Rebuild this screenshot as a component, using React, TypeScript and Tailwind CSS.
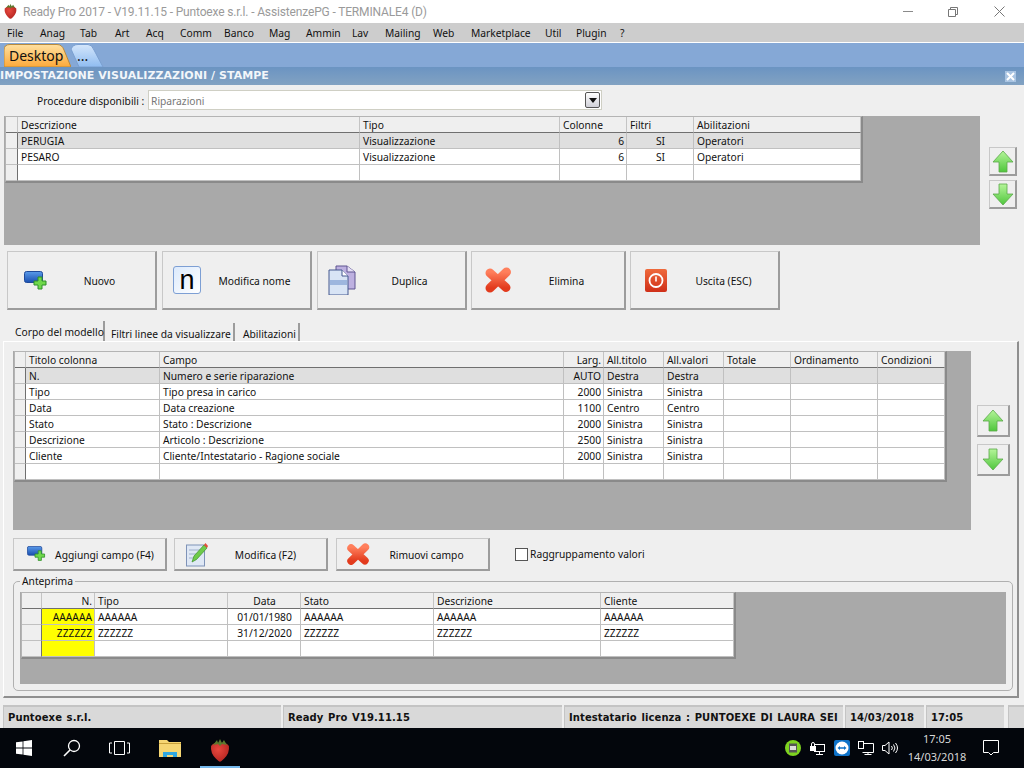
import React from "react";

type Cell = { t?: string; a?: "r" | "c"; y?: boolean };
const c = (t: string, a?: "r" | "c", y?: boolean): Cell => ({ t, a, y });

function Grid({ cols, head, rows, selected }: { cols: string; head: Cell[]; rows: Cell[][]; selected?: number }) {
  return (
    <div className={`grid w-fit auto-rows-[16px] border-l border-t border-[#b4b4b4] border-r-2 border-r-[#8a8a8a] border-b-2 border-b-[#8a8a8a] text-[10.25px] leading-[17px] text-[#111] ${cols}`}>
      {[null, ...head].map((h, i) =>
        <div key={i} className={`overflow-hidden whitespace-nowrap border-b border-r border-b-[#6f6f6f] border-r-[#c4c4c4] bg-[#efefef] pl-[3px] pr-[2px] ${i === 0 ? "border-r-[#6f6f6f]" : ""} ${h?.a === "r" ? "text-right" : h?.a === "c" ? "text-center" : ""}`}>{h?.t}</div>
      )}
      {rows.map((r, ri) => (
        <React.Fragment key={ri}>
          <div className="border-b border-r border-b-[#c0c0c0] border-r-[#6f6f6f] bg-[#efefef]" />
          {r.map((cell, ci) => (
            <div key={ci} className={`overflow-hidden whitespace-nowrap border-b border-r border-[#c0c0c0] pl-[3px] pr-[2px] ${cell.y ? "bg-[#ffff00]" : ri === selected ? "bg-[#dfdfdf]" : "bg-white"} ${cell.a === "r" ? "text-right" : cell.a === "c" ? "text-center" : ""}`}>{cell.t}</div>
          ))}
        </React.Fragment>
      ))}
    </div>
  );
}

function Arrow({ up, id }: { up?: boolean; id: string }) {
  return (
    <svg width="22" height="23" viewBox="0 0 22 23">
      <defs>
        <linearGradient id={id} x1="0" y1="0" x2="0" y2="1">
          <stop offset="0" stopColor="#b5f59a" />
          <stop offset="1" stopColor="#4fc63c" />
        </linearGradient>
      </defs>
      <polygon
        points={up ? "11,1 21,12 15,12 15,22 7,22 7,12 1,12" : "7,1 15,1 15,11 21,11 11,22 1,11 7,11"}
        fill={`url(#${id})`}
        stroke="#5aa84a"
        strokeWidth="0.8"
      />
    </svg>
  );
}

function ArrowBtn({ up, id, size }: { up?: boolean; id: string; size: string }) {
  return (
    <div className={`flex items-center justify-center border border-[#c8c8c8] border-b-2 border-r-2 border-b-[#9c9c9c] border-r-[#9c9c9c] bg-[#efefef] ${size}`}>
      <Arrow up={up} id={id} />
    </div>
  );
}

function AddIcon({ s = 1, id }: { s?: number; id: string }) {
  return (
    <svg width={24 * s} height={19 * s} viewBox="0 0 24 19">
      <defs>
        <linearGradient id={id} x1="0" y1="0" x2="0" y2="1">
          <stop offset="0" stopColor="#5a9bea" />
          <stop offset="1" stopColor="#1a4fb0" />
        </linearGradient>
      </defs>
      <rect x="0.5" y="0.5" width="18" height="11" rx="2" fill={`url(#${id})`} stroke="#1f4a9a" />
      <path d="M14 6h4v4h4v4h-4v4h-4v-4h-4v-4h4z" fill="#6fd84a" stroke="#2f8f2a" strokeWidth="1" />
    </svg>
  );
}

function NameIcon() {
  return (
    <div className="flex h-[28px] w-[28px] items-center justify-center rounded-[3px] border border-[#7d9fd4] bg-gradient-to-br from-[#dceafc] to-white font-['Liberation_Sans',sans-serif] text-[27px] leading-[24px] text-black">
      n
    </div>
  );
}

function DupIcon() {
  return (
    <svg width="28" height="30" viewBox="0 0 28 30">
      <path d="M8 1h11l8 6v17H8z" fill="#bdb0e0" stroke="#5f5590" />
      <path d="M19 1v6h8" fill="#e6e0f6" stroke="#5f5590" />
      <path d="M1 5h13l6 6v19H1z" fill="#d8e4f5" stroke="#44598f" />
      <path d="M14 5v6h6" fill="#fff" stroke="#44598f" />
      <rect x="2" y="15" width="17" height="5" fill="#9db6de" />
    </svg>
  );
}

function XIcon({ id, s = 28 }: { id: string; s?: number }) {
  return (
    <svg width={s} height={s * 0.93} viewBox="0 0 28 26">
      <defs>
        <linearGradient id={id} x1="0" y1="0" x2="0" y2="1">
          <stop offset="0" stopColor="#ff7f5c" />
          <stop offset="1" stopColor="#e23a1c" />
        </linearGradient>
      </defs>
      <path d="M6 6L22 20.5M22.5 5L6 21" fill="none" stroke={`url(#${id})`} strokeWidth="9" strokeLinecap="round" />
    </svg>
  );
}

function PowerIcon() {
  return (
    <svg width="22" height="23" viewBox="0 0 22 23">
      <defs>
        <linearGradient id="pw" x1="0" y1="0" x2="0" y2="1">
          <stop offset="0" stopColor="#ef6a3c" />
          <stop offset="1" stopColor="#cf2f18" />
        </linearGradient>
      </defs>
      <rect width="22" height="23" rx="2" fill="url(#pw)" />
      <circle cx="11" cy="11.5" r="6.5" fill="none" stroke="#fff" strokeWidth="1.8" />
      <rect x="10.2" y="7.5" width="1.6" height="5" fill="#fff" />
    </svg>
  );
}

function EditIcon() {
  return (
    <svg width="22" height="25" viewBox="0 0 22 25">
      <rect x="0.5" y="3" width="18" height="21" fill="#dfe8f5" stroke="#7f93b8" />
      <path d="M3 8h12M3 12h8M3 16h6" stroke="#9fb0cc" />
      <path d="M6 20 L8 14 L18 3 L21 6 L10.5 17.5z" fill="#6ecb4a" stroke="#3d8f2c" strokeWidth="0.7" />
      <path d="M18 3 L19.5 1 L22 4 L21 6z" fill="#e2503a" />
    </svg>
  );
}

function Strawberry({ s, id }: { s: number; id: string }) {
  return (
    <svg width={s} height={s * 1.14} viewBox="0 0 20 23">
      <defs>
        <radialGradient id={id} cx="0.4" cy="0.35" r="0.8">
          <stop offset="0" stopColor="#e8483e" />
          <stop offset="1" stopColor="#a91f1c" />
        </radialGradient>
      </defs>
      <path d="M1 7 Q4 3 10 4 Q16 3 19 7 Q20 14 14 20 Q11 23 10 23 Q9 23 6 20 Q0 14 1 7z" fill={`url(#${id})`} />
      <path d="M3 6 L7 1 L8 4 L10 0 L12 4 L14 1 L17 6 L12 5 L10 7 L8 5z" fill="#5c7a2e" />
    </svg>
  );
}

function Btn({ w, h = "h-[59px]", box, ml, icon, label }: { w: string; h?: string; box: string; ml: string; icon: React.ReactNode; label: string }) {
  return (
    <div className={`flex shrink-0 items-center border border-[#c8c8c8] border-b-2 border-r-2 border-b-[#9c9c9c] border-r-[#9c9c9c] bg-[#efefef] text-[10.25px] text-[#111] ${w} ${h}`}>
      <div className={`shrink-0 ${box}`}><div className={`w-fit ${ml}`}>{icon}</div></div>
      <div className="flex-1 whitespace-nowrap pt-[3px] text-center">{label}</div>
    </div>
  );
}

const menu = ["File", "Anag", "Tab", "Art", "Acq", "Comm", "Banco", "Mag", "Ammin", "Lav", "Mailing", "Web", "Marketplace", "Util", "Plugin", "?"];

function StatusPanel({ w, label, ml }: { w: string; label?: string; ml?: string }) {
  return (
    <div className={`flex h-[23px] shrink-0 items-center overflow-hidden whitespace-nowrap border-l border-t-2 border-l-[#c4c4c4] border-t-[#c4c4c4] bg-[#d9d9d9] pl-[4px] font-['DejaVu_Sans',sans-serif] text-[10px] font-bold tracking-[0.1px] [word-spacing:1px] text-[#111] ${w} ${ml ?? ""}`}>
      {label}
    </div>
  );
}

export default function App() {
  return (
    <div className="flex h-[768px] w-[1024px] flex-col overflow-hidden bg-[#efefef] font-['Noto_Sans','Liberation_Sans',sans-serif]">
      {/* Title bar */}
      <div className="flex h-[23px] shrink-0 items-center bg-white pl-[4px]">
        <Strawberry s={13} id="st1" />
        <div className="ml-[6px] flex-1 whitespace-nowrap font-['Roboto',sans-serif] text-[12px] tracking-[-0.15px] text-[#9a9a9a]">Ready Pro 2017 - V19.11.15 - Puntoexe s.r.l. - AssistenzePG - TERMINALE4 (D)</div>
        <div className="mr-[35px] h-[1px] w-[10px] bg-[#8a8a8a]" />
        <svg className="mr-[36px]" width="10" height="10" viewBox="0 0 10 10"><path d="M2.5 2.5V.5h7v7h-2M.5 2.5h7v7h-7z" fill="none" stroke="#777" /></svg>
        <svg className="mr-[19px]" width="11" height="11" viewBox="0 0 11 11"><path d="M.5.5l10 10M10.5.5l-10 10" stroke="#777" /></svg>
      </div>
      {/* Menu */}
      <div className="grid h-[20px] shrink-0 grid-cols-[33px_40px_35px_31px_34px_44px_45px_37px_46px_33px_48px_38px_74px_31px_44px_20px] items-center border-b border-white bg-[#cdcdcd] pl-[7px] pt-[2px] text-[10.25px] text-[#111]">
        {menu.map((m) => <span key={m}>{m}</span>)}
      </div>
      {/* Tab strip */}
      <div className="flex h-[24px] shrink-0 items-end bg-[#85a8d6] pl-[4px] text-[14px] text-[#111]">
        <div className="relative flex h-[23px] w-[67px] items-center pl-[5px]">
          <svg className="absolute inset-0" width="67" height="23" viewBox="0 0 67 23">
            <defs><linearGradient id="tg" x1="0" y1="0" x2="0" y2="1"><stop offset="0" stopColor="#ffe0a0" /><stop offset="1" stopColor="#fca93a" /></linearGradient></defs>
            <path d="M0 23V6Q0 .5 6 .5H53Q58 .5 60 6L67 23z" fill="url(#tg)" stroke="#b98a3c" />
          </svg>
          <span className="relative">Desktop</span>
        </div>
        <div className="relative flex h-[23px] w-[33px] items-center pl-[6px]">
          <svg className="absolute inset-0" width="33" height="23" viewBox="0 0 33 23">
            <defs><linearGradient id="tb" x1="0" y1="0" x2="0" y2="1"><stop offset="0" stopColor="#d4e6fb" /><stop offset="1" stopColor="#8fbcf0" /></linearGradient></defs>
            <path d="M0 5Q2 .5 7 .5H17Q21 .5 23 6L32 23H8z" fill="url(#tb)" stroke="#7a9fd0" />
          </svg>
          <span className="relative">...</span>
        </div>
      </div>
      {/* Form title */}
      <div className="flex h-[18px] shrink-0 items-center justify-between bg-gradient-to-b from-[#6b94c2] to-[#82a2c2] pr-[8px] font-['DejaVu_Sans',sans-serif] text-[11px] font-bold tracking-[0.06px] text-[#f2f6fa]">
        <span>IMPOSTAZIONE VISUALIZZAZIONI / STAMPE</span>
        <div className="flex h-[11px] w-[11px] items-center justify-center bg-[#a9c4e2]">
          <svg width="9" height="9" viewBox="0 0 9 9"><path d="M1 1l7 7M8 1l-7 7" stroke="#fff" strokeWidth="2" /></svg>
        </div>
      </div>

      {/* Form */}
      <div className="flex h-[618px] shrink-0 flex-col text-[10.25px] text-[#111]">
        <div className="ml-[37px] mt-[5px] flex h-[20px] items-center">
          <div className="w-[111px] whitespace-nowrap pt-[3px]">Procedure disponibili :</div>
          <div className="flex h-[20px] w-[454px] items-center justify-between border border-[#cfcfc4] bg-white pl-[2px] pr-[1px] text-[#777]">
            <span className="pt-[3px]">Riparazioni</span>
            <div className="flex h-[16px] w-[15px] items-center justify-center rounded-[2px] border border-[#555] bg-gradient-to-b from-white to-[#d0d0d8]">
              <svg width="8" height="5" viewBox="0 0 8 5"><path d="M0 0h8L4 5z" fill="#111" /></svg>
            </div>
          </div>
        </div>

        <div className="ml-[4px] mt-[6px] flex">
          <div className="h-[129px] w-[976px] bg-[#a9a9a9] pl-[1px]">
            <Grid
              cols="grid-cols-[12px_342px_200px_67px_67px_167px]"
              head={[c("Descrizione"), c("Tipo"), c("Colonne"), c("Filtri"), c("Abilitazioni")]}
              selected={0}
              rows={[
                [c("PERUGIA"), c("Visualizzazione"), c("6", "r"), c("SI", "c"), c("Operatori")],
                [c("PESARO"), c("Visualizzazione"), c("6", "r"), c("SI", "c"), c("Operatori")],
                [c(""), c(""), c(""), c(""), c("")],
              ]}
            />
          </div>
          <div className="ml-[9px] mt-[31px] flex flex-col gap-[4px]">
            <ArrowBtn up id="a1" size="h-[29px] w-[28px]" />
            <ArrowBtn id="a2" size="h-[29px] w-[28px]" />
          </div>
        </div>

        <div className="ml-[7px] mt-[6px] flex">
          <Btn w="w-[150px]" box="w-[36px]" ml="ml-[16px]" icon={<AddIcon s={1} id="ad1" />} label="Nuovo" />
          <div className="w-[5px]" />
          <Btn w="w-[150px]" box="w-[36px]" ml="ml-[10px]" icon={<NameIcon />} label="Modifica nome" />
          <div className="w-[5px]" />
          <Btn w="w-[150px]" box="w-[36px]" ml="ml-[10px]" icon={<DupIcon />} label="Duplica" />
          <div className="w-[4px]" />
          <Btn w="w-[155px]" box="w-[37px]" ml="ml-[12px]" icon={<XIcon id="x1" />} label="Elimina" />
          <div className="w-[4px]" />
          <Btn w="w-[150px]" box="w-[38px]" ml="ml-[14px]" icon={<PowerIcon />} label="Uscita (ESC)" />
        </div>

        {/* Tabs */}
        <div className="ml-[3px] mt-[12px] flex h-[19px] items-end whitespace-nowrap">
          <div className="flex h-[20px] w-[102px] items-center border-r-2 border-[#9c9c9c] pt-[3px] pl-[12px]">Corpo del modello</div>
          <div className="ml-[1px] flex h-[18px] w-[129px] items-center border-r-2 border-[#9c9c9c] pl-[5px] pt-[5px]">Filtri linee da visualizzare</div>
          <div className="ml-[1px] flex h-[18px] w-[64px] items-center border-r-2 border-[#9c9c9c] pl-[7px] pt-[5px]">Abilitazioni</div>
        </div>
        <div className="ml-[3px] flex h-[357px] w-[1016px] flex-col border-l border-t border-l-white border-t-white border-b-2 border-r-2 border-b-[#8f8f8f] border-r-[#8f8f8f] pl-[9px] pt-[9px]">
          <div className="flex">
            <div className="h-[179px] w-[958px] bg-[#a9a9a9] pl-[1px]">
              <Grid
                cols="grid-cols-[11px_134px_404px_40px_60px_60px_67px_87px_67px]"
                head={[c("Titolo colonna"), c("Campo"), c("Larg.", "r"), c("All.titolo"), c("All.valori"), c("Totale"), c("Ordinamento"), c("Condizioni")]}
                selected={0}
                rows={[
                  [c("N."), c("Numero e serie riparazione"), c("AUTO", "r"), c("Destra"), c("Destra"), c(""), c(""), c("")],
                  [c("Tipo"), c("Tipo presa in carico"), c("2000", "r"), c("Sinistra"), c("Sinistra"), c(""), c(""), c("")],
                  [c("Data"), c("Data creazione"), c("1100", "r"), c("Centro"), c("Centro"), c(""), c(""), c("")],
                  [c("Stato"), c("Stato : Descrizione"), c("2000", "r"), c("Sinistra"), c("Sinistra"), c(""), c(""), c("")],
                  [c("Descrizione"), c("Articolo : Descrizione"), c("2500", "r"), c("Sinistra"), c("Sinistra"), c(""), c(""), c("")],
                  [c("Cliente"), c("Cliente/Intestatario - Ragione sociale"), c("2000", "r"), c("Sinistra"), c("Sinistra"), c(""), c(""), c("")],
                  [c(""), c(""), c(""), c(""), c(""), c(""), c(""), c("")],
                ]}
              />
            </div>
            <div className="ml-[6px] mt-[54px] flex flex-col gap-[7px]">
              <ArrowBtn up id="a3" size="h-[32px] w-[33px]" />
              <ArrowBtn id="a4" size="h-[32px] w-[33px]" />
            </div>
          </div>

          <div className="mt-[8px] flex h-[33px] items-center">
            <Btn w="w-[154px]" h="h-[33px]" box="w-[30px]" ml="ml-[13px]" icon={<AddIcon s={0.8} id="ad2" />} label="Aggiungi campo (F4)" />
            <div className="w-[7px]" />
            <Btn w="w-[154px]" h="h-[33px]" box="w-[30px]" ml="ml-[11px]" icon={<EditIcon />} label="Modifica (F2)" />
            <div className="w-[8px]" />
            <Btn w="w-[154px]" h="h-[33px]" box="w-[28px]" ml="ml-[9px]" icon={<XIcon id="x2" s={24} />} label="Rimuovi campo" />
            <div className="ml-[25px] h-[13px] w-[13px] border border-[#555] bg-white" />
            <span className="ml-[2px] whitespace-nowrap">Raggruppamento valori</span>
          </div>

          <fieldset className="mt-[3px] h-[117px] w-[1000px] rounded-[5px] border border-[#b0b0b0]">
            <legend className="ml-[6px] px-[2px] leading-[14px]">Anteprima</legend>
            <div className="ml-[6px] mt-[4px] h-[92px] w-[986px] bg-[#a9a9a9] pl-[1px]">
              <Grid
                cols="grid-cols-[20px_53px_133px_73px_133px_167px_133px]"
                head={[c("N.", "r"), c("Tipo"), c("Data", "c"), c("Stato"), c("Descrizione"), c("Cliente")]}
                rows={[
                  [c("AAAAAA", "r", true), c("AAAAAA"), c("01/01/1980", "c"), c("AAAAAA"), c("AAAAAA"), c("AAAAAA")],
                  [c("ZZZZZZ", "r", true), c("ZZZZZZ"), c("31/12/2020", "c"), c("ZZZZZZ"), c("ZZZZZZ"), c("ZZZZZZ")],
                  [c("", undefined, true), c(""), c(""), c(""), c(""), c("")],
                ]}
              />
            </div>
          </fieldset>
        </div>
      </div>

      {/* Status bar */}
      <div className="mt-[2px] flex shrink-0 pl-[3px]">
        <StatusPanel w="w-[278px]" label="Puntoexe s.r.l." />
        <StatusPanel w="w-[279px]" ml="ml-[2px]" label="Ready Pro V19.11.15" />
        <StatusPanel w="w-[279px]" ml="ml-[2px]" label="Intestatario licenza : PUNTOEXE DI LAURA SEI" />
        <StatusPanel w="w-[79px]" ml="ml-[2px]" label="14/03/2018" />
        <StatusPanel w="w-[78px]" ml="ml-[2px]" label="17:05" />
        <StatusPanel w="w-[16px]" ml="ml-[4px]" />
      </div>

      {/* Taskbar */}
      <div className="flex h-[40px] shrink-0 items-center bg-[#03060c] text-white">
        <svg className="ml-[16px]" width="16" height="16" viewBox="0 0 16 16"><path d="M0 2.3l6.6-.9v6.2H0zM7.4 1.3L16 0v7.6H7.4zM0 8.4h6.6v6.2L0 13.7zM7.4 8.4H16V16l-8.6-1.2z" fill="#fff" /></svg>
        <svg className="ml-[31px]" width="18" height="18" viewBox="0 0 18 18"><circle cx="11" cy="7" r="5.5" fill="none" stroke="#fff" strokeWidth="1.3" /><path d="M7 11l-6 6" stroke="#fff" strokeWidth="1.6" /></svg>
        <svg className="ml-[28px]" width="21" height="14" viewBox="0 0 21 14"><path d="M5.5.5h10v13h-10zM3 2H.5v10H3M18 2h2.5v10H18" fill="none" stroke="#fff" /></svg>
        <svg className="ml-[29px]" width="22" height="18" viewBox="0 0 22 18"><path d="M0 1h8l2 2h12v15H0z" fill="#f6d673" /><rect x="0" y="4" width="22" height="1" fill="#c9a23c" /><path d="M4 18v-5h14v5h-4v-2H8v2z" fill="#2fa6e0" /></svg>
        <div className="ml-[19px] flex h-[40px] w-[40px] flex-col items-center justify-end">
          <Strawberry s={20} id="st2" />
          <div className="mt-[4px] h-[2px] w-[40px] bg-[#76b9ed]" />
        </div>
        <div className="ml-[545px] flex items-center">
          <svg width="16" height="16" viewBox="0 0 16 16"><circle cx="8" cy="8" r="8" fill="#7ed321" /><rect x="4" y="3.5" width="8" height="9" fill="#555" /><rect x="5" y="6" width="6" height="4" fill="#ddd" /></svg>
          <svg className="ml-[9px]" width="15" height="15" viewBox="0 0 15 15"><rect x="4.5" y="3.5" width="10" height="7" fill="none" stroke="#fff" /><path d="M9.5 11v2M6 13.5h7" stroke="#fff" /><rect x="0" y="5" width="6" height="5" fill="#fff" /><path d="M1.5 5V3a1.5 1.5 0 013 0" fill="none" stroke="#fff" /></svg>
          <div className="ml-[9px] flex h-[16px] w-[16px] items-center justify-center rounded-[2px] bg-[#0e72c8]">
            <svg width="14" height="14" viewBox="0 0 14 14"><circle cx="7" cy="7" r="6.5" fill="#fff" /><path d="M2.5 7l2.5-2v1.2h4V5l2.5 2-2.5 2V7.8H5V9z" fill="#0e72c8" /></svg>
          </div>
          <svg className="ml-[8px]" width="16" height="15" viewBox="0 0 16 15"><path d="M4.5 2.5h11v9h-11M10 11.5v2M6.5 13.5h7" fill="none" stroke="#fff" /><rect x=".5" y=".5" width="5" height="7" fill="#03060c" stroke="#fff" /></svg>
          <svg className="ml-[8px]" width="16" height="14" viewBox="0 0 16 14"><path d="M.5 4.5h2.5L7 1v12L3 9.5H.5z" fill="none" stroke="#fff" /><path d="M9.5 5a3 3 0 010 4M11.5 3.5a5.5 5.5 0 010 7M13.5 2a8 8 0 010 10" fill="none" stroke="#fff" /></svg>
        </div>
        <div className="ml-[10px] flex w-[58px] flex-col items-center whitespace-nowrap text-[11px] leading-[18px] text-[#d8d8d8]">
          <span>17:05</span>
          <span>14/03/2018</span>
        </div>
        <svg className="ml-[17px]" width="16" height="16" viewBox="0 0 16 16"><path d="M.5.5h15v12h-5L8 15l-2.5-2.5h-5z" fill="none" stroke="#fff" /></svg>
      </div>
    </div>
  );
}
